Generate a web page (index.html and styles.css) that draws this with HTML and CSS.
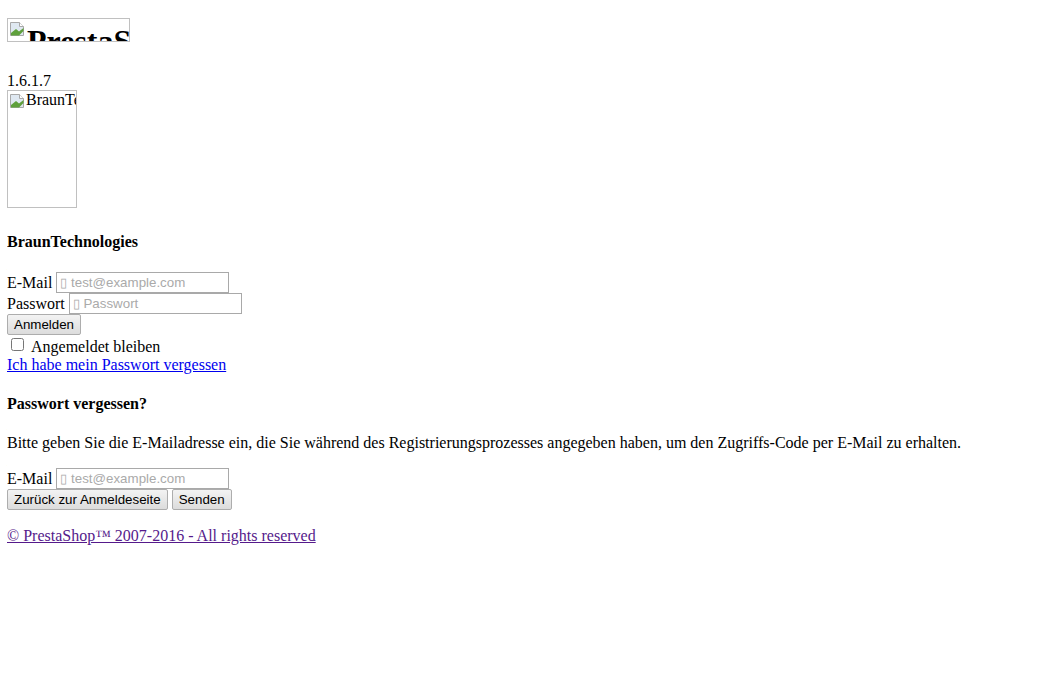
FILE: index.html
```html
<!DOCTYPE html>
<html>
<head>
  <title>PrestaShop - Administration</title>
  <link rel="stylesheet" href="styles.css">
</head>
<body>
  <h1 class="logo">
    <span class="broken-img logo-img">
      <svg class="broken-icon" width="16" height="16" viewBox="0 0 16 16">
        <path d="M1.5 1.5h9l4 4v9h-13z" fill="#dfe8f1" stroke="#a8a8a8"/>
        <path d="M10.5 1.5v4h4" fill="#fff" stroke="#a8a8a8"/>
        <path d="M2 14.5v-2.5l5-4 3 2.5 4.5-3.5v3l-4.5 4.5z" fill="#5fa03c"/>
      </svg>
      <span class="alt">PrestaShop</span>
    </span>
  </h1>
  <div class="version">1.6.1.7</div>
  <div class="shop-line">
    <span class="broken-img shop-img">
      <svg class="broken-icon" width="16" height="16" viewBox="0 0 16 16">
        <path d="M1.5 1.5h9l4 4v9h-13z" fill="#dfe8f1" stroke="#a8a8a8"/>
        <path d="M10.5 1.5v4h4" fill="#fff" stroke="#a8a8a8"/>
        <path d="M2 14.5v-2.5l5-4 3 2.5 4.5-3.5v3l-4.5 4.5z" fill="#5fa03c"/>
      </svg>
      <span class="alt">BraunTechnologies</span>
    </span>
  </div>

  <h4>BraunTechnologies</h4>
  <form class="login-form">
    <div class="row">
      <label for="email">E-Mail</label>
      <input type="text" id="email" class="field" placeholder="&#x25AF; test@example.com">
    </div>
    <div class="row">
      <label for="passwd">Passwort</label>
      <input type="password" id="passwd" class="field" placeholder="&#x25AF; Passwort">
    </div>
    <div class="row">
      <button type="button" class="btn">Anmelden</button>
    </div>
    <div class="check-row">
      <input type="checkbox" id="stay">
      <label for="stay">Angemeldet bleiben</label>
    </div>
    <a href="#forgot" class="forgot-link">Ich habe mein Passwort vergessen</a>
  </form>

  <h4 id="forgot">Passwort vergessen?</h4>
  <p>Bitte geben Sie die E-Mailadresse ein, die Sie während des Registrierungsprozesses angegeben haben, um den Zugriffs-Code per E-Mail zu erhalten.</p>
  <form class="forgot-form">
    <div class="row">
      <label for="email_forgot">E-Mail</label>
      <input type="text" id="email_forgot" class="field" placeholder="&#x25AF; test@example.com">
    </div>
    <div class="row btn-row">
      <button type="button" class="btn">Zurück zur Anmeldeseite</button>
      <button type="button" class="btn">Senden</button>
    </div>
  </form>

  <p class="footer"><a href="#" class="visited">© PrestaShop™ 2007-2016 - All rights reserved</a></p>
</body>
</html>
```

FILE: styles.css
```css
body {
  margin: 8px 8px 8px 7px;
  font-family: "Liberation Serif", "Times New Roman", serif;
  font-size: 16px;
  color: #000;
  background: #fff;
}
.logo {
  margin: 10px 0 29px;
  height: 24px;
  font-size: 32px;
  line-height: 1;
}
.broken-img {
  display: inline-flex;
  align-items: flex-start;
  box-sizing: border-box;
  border: 1px solid #c0c0c0;
  overflow: hidden;
  white-space: nowrap;
}
.broken-icon {
  flex: none;
  margin: 2px 0 0 1px;
}
.logo-img {
  display: flex;
  width: 123px;
  height: 24px;
}
.logo-img .alt {
  margin: 6px 0 0 2px;
  font-weight: bold;
}
.version {
  line-height: 19px;
}
.shop-line {
  line-height: 18px;
  padding-bottom: 4px;
}
.shop-img {
  width: 70px;
  height: 118px;
  vertical-align: baseline;
}
.shop-img .alt {
  margin-left: 1px;
  line-height: 18px;
}
h4 {
  margin: 21px 0;
  font-size: 16px;
}
.row {
  display: flex;
  align-items: center;
  gap: 4px;
  height: 21px;
}
.field {
  box-sizing: border-box;
  width: 173px;
  height: 21px;
  margin: 0;
  padding: 1px 3px;
  border: 1px solid #a9a9a9;
  font-family: "Liberation Sans", Arial, sans-serif;
  font-size: 13.33px;
}
.field::placeholder {
  color: #aaa;
}
.btn {
  box-sizing: border-box;
  height: 21px;
  margin: 0;
  padding: 0 6px;
  border: 1px solid #adadad;
  border-radius: 2px;
  background: linear-gradient(#f3f3f3, #dcdcdc);
  font-family: "Liberation Sans", Arial, sans-serif;
  font-size: 13.33px;
  color: #000;
}
.check-row {
  display: flex;
  align-items: flex-start;
  height: 21px;
}
.check-row input {
  width: 13px;
  height: 13px;
  margin: 3px 7px 0 4px;
}
.check-row label {
  padding-top: 3px;
  line-height: 18px;
}
.forgot-link {
  display: block;
  line-height: 18px;
  color: #0000ee;
}
p {
  margin: 16px 0;
}
.forgot-form .row:first-child {
  margin-top: 2px;
}
.footer {
  margin-top: 17px;
}
.footer .visited {
  color: #551a8b;
}
```
